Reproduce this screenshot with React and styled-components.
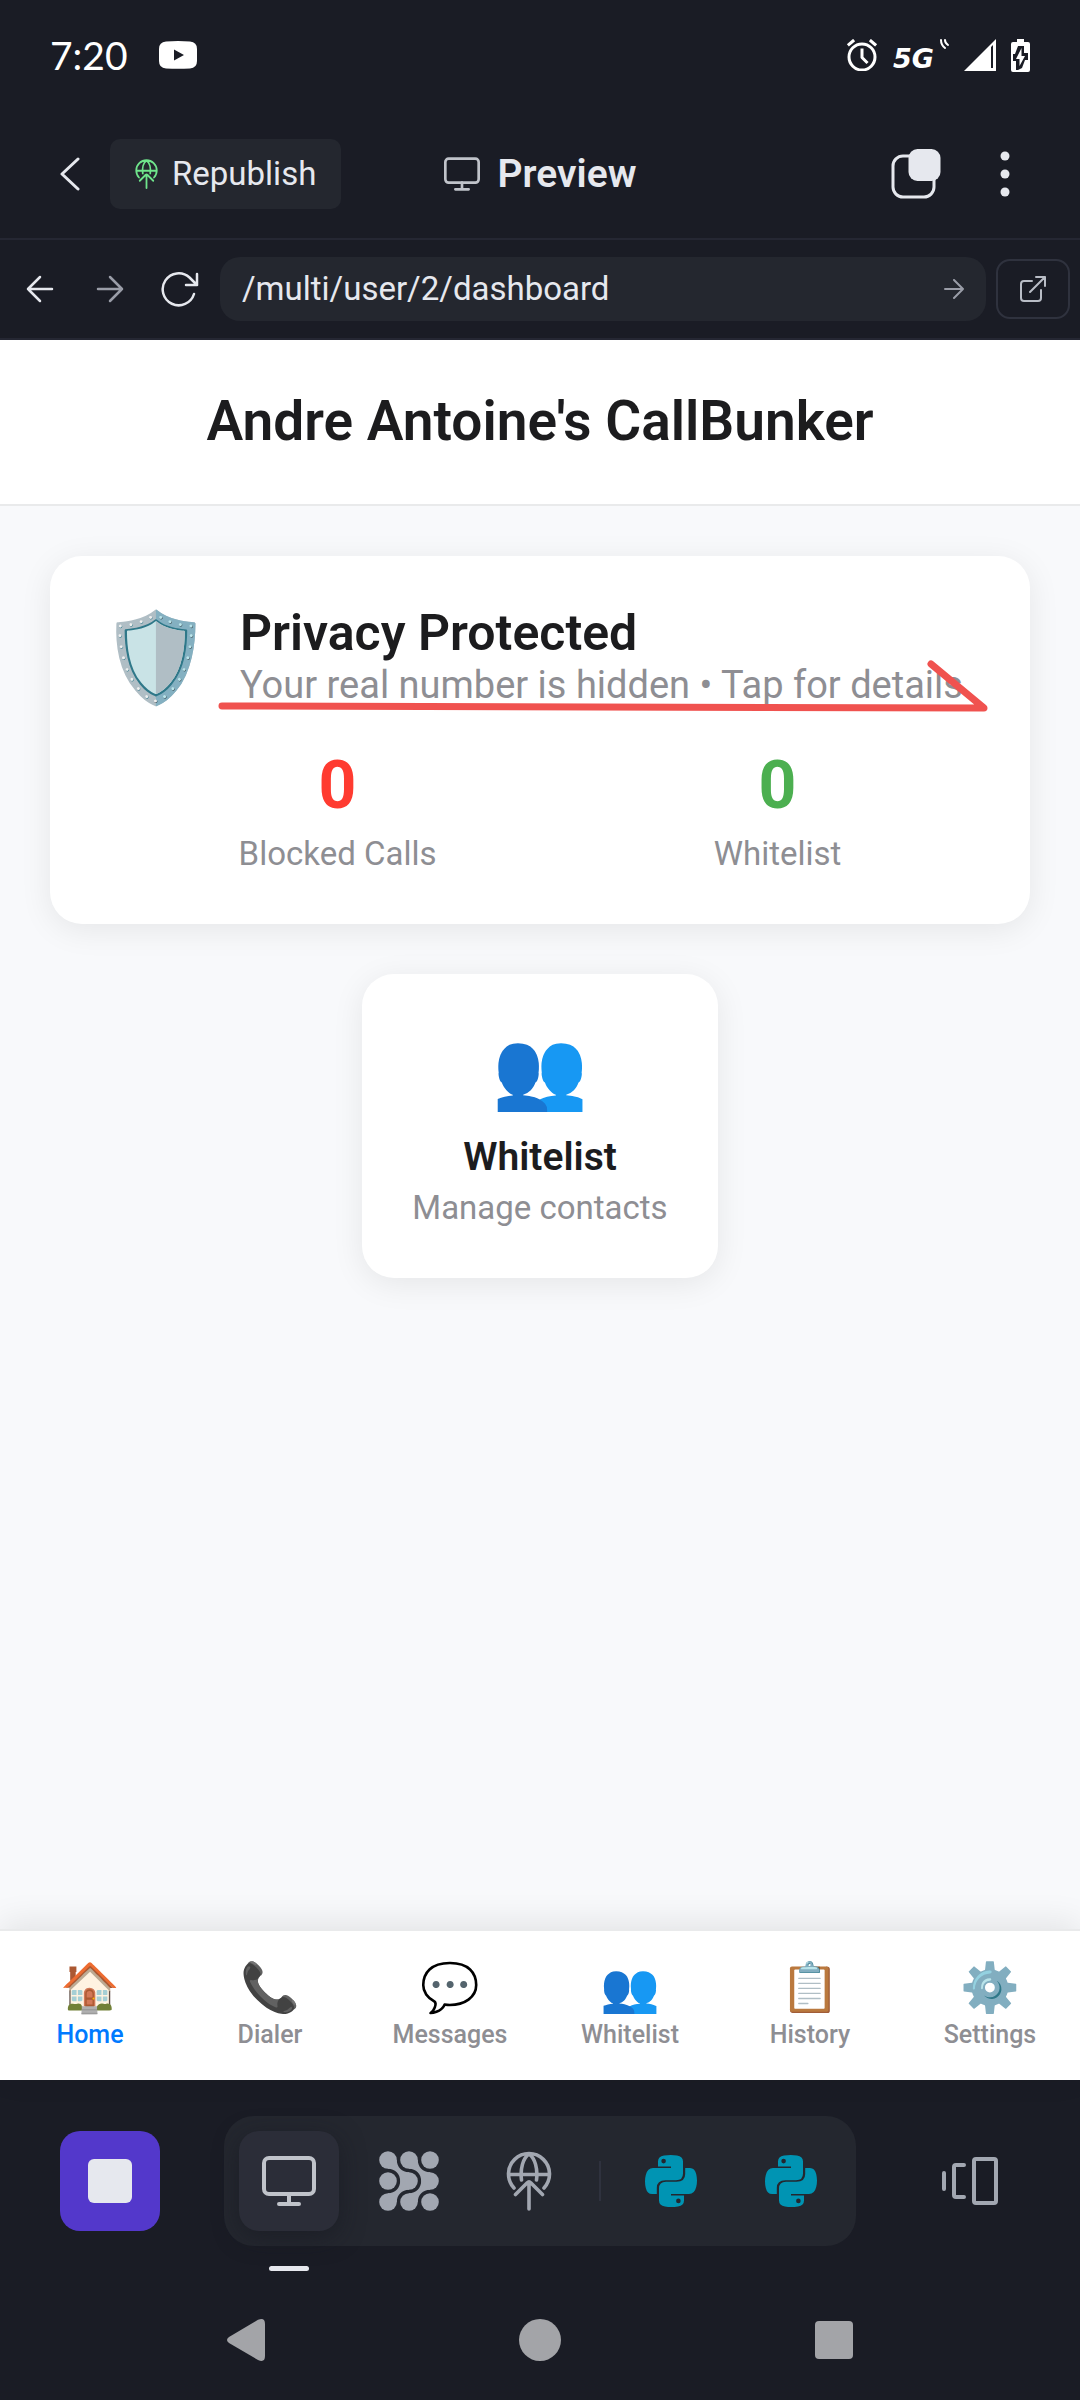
import React from "react";
import styled, { createGlobalStyle, css } from "styled-components";

const colors = {
  chrome: "#1a1c25",
  surface: "#24272f",
  raised: "#2b2d38",
  line: "#252733",
  text: "#e6e8ee",
  muted: "#a2a7b1",
  ink: "#1c1c1e",
  gray: "#8e8e93",
  page: "#f8f9fb",
};

const GlobalStyle = createGlobalStyle`
  *, *::before, *::after { box-sizing: border-box; }
  body { margin: 0; background: ${colors.chrome}; }
  h1, h2, p, dl, dd, dt { margin: 0; font-weight: inherit; }
  button, input { font: inherit; }
`;

const Screen = styled.div`
  min-height: 100vh;
  display: flex;
  flex-direction: column;
  background: ${colors.chrome};
  color: ${colors.text};
  font-family: Roboto, "Liberation Sans", sans-serif;
`;

const Icon = styled.svg`
  display: block;
  flex: none;
  fill: none;
  stroke: currentColor;
  stroke-width: ${(p) => p.$stroke || 4};
  stroke-linecap: round;
  stroke-linejoin: round;
`;

const PlainButton = styled.button`
  display: flex;
  align-items: center;
  justify-content: center;
  padding: 0;
  border: 0;
  background: none;
  color: inherit;
`;

/* Status bar */
const StatusBar = styled.header`
  height: 110px;
  padding: 0 50px;
  display: flex;
  align-items: center;
  justify-content: space-between;
  color: #fff;
`;
const StatusGroup = styled.div`
  display: flex;
  align-items: center;
  gap: ${(p) => p.$gap}px;
`;
const Clock = styled.time`
  font: 400 39px/46px Lato, sans-serif;
`;
const NetworkGroup = styled.span`
  display: flex;
  align-items: flex-start;
  gap: 6px;
  height: 32px;
`;
const Network = styled.span`
  font: italic 700 27px/40px "DejaVu Sans", sans-serif;
`;

/* App header */
const AppHeader = styled.div`
  height: 130px;
  padding: 0 48px;
  display: grid;
  grid-template-columns: 1fr auto 1fr;
  align-items: center;
  border-bottom: 2px solid ${colors.line};
`;
const HeaderSide = styled.div`
  display: flex;
  align-items: center;
  gap: ${(p) => p.$gap}px;
  justify-content: ${(p) => (p.$end ? "flex-end" : "flex-start")};
`;
const IconButton = styled(PlainButton)`
  width: ${(p) => p.$w}px;
  height: 64px;
  color: ${(p) => p.$color || "inherit"};
`;
const Republish = styled(PlainButton)`
  height: 70px;
  padding: 0 25px;
  gap: 14px;
  border-radius: 10px;
  background: ${colors.surface};
  font-size: 33px;
  line-height: 40px;
`;
const PublishMark = styled.span`
  color: #6fe58c;
`;
const PreviewTitle = styled.div`
  display: flex;
  align-items: center;
  gap: 18px;
  font-size: 39px;
  line-height: 46px;
  font-weight: 600;
`;
const TitleMark = styled.span`
  color: #c0c3ca;
`;

/* Address bar */
const AddressBar = styled.form`
  height: 100px;
  padding: 0 10px 0 5px;
  display: flex;
  align-items: center;
  border-bottom: 2px solid ${colors.line};
`;
const AddressField = styled.div`
  flex: 1;
  min-width: 0;
  height: 64px;
  margin: 0 10px 0 5px;
  padding: 0 12px 0 22px;
  display: flex;
  align-items: center;
  border-radius: 20px;
  background: ${colors.surface};
`;
const AddressInput = styled.input`
  flex: 1;
  min-width: 0;
  padding: 0;
  border: 0;
  outline: 0;
  background: none;
  color: ${colors.text};
  font-size: 33px;
  line-height: 40px;
`;
const OpenButton = styled(PlainButton)`
  width: 74px;
  height: 60px;
  border: 2px solid #2f323e;
  border-radius: 14px;
  color: #b9bdc6;
`;

/* Previewed page */
const Page = styled.main`
  flex: 1;
  display: flex;
  flex-direction: column;
  background: ${colors.page};
  color: ${colors.ink};
`;
const PageHeader = styled.header`
  padding: 48px 50px 50px;
  border-bottom: 2px solid #e9eaeb;
  background: #fff;
  text-align: center;
`;
const PageTitle = styled.h1`
  font-size: 55px;
  line-height: 66px;
  font-weight: 600;
`;
const PageBody = styled.div`
  flex: 1;
  padding: 50px;
  display: flex;
  flex-direction: column;
  align-items: center;
  gap: 50px;
`;
const cardStyle = css`
  border-radius: 32px;
  background: #fff;
  box-shadow: 0 6px 32px rgba(0, 0, 0, 0.08);
`;
const PrivacyCard = styled.section`
  ${cardStyle}
  position: relative;
  align-self: stretch;
  padding: 50px;
`;
const PrivacyHead = styled.div`
  display: flex;
  align-items: center;
  gap: 28px;
  margin-bottom: 42px;
`;
const Emoji = styled.span`
  flex: none;
  display: flex;
  align-items: center;
  justify-content: center;
  width: ${(p) => p.$w}px;
  height: ${(p) => p.$h}px;
  font-family: "Noto Color Emoji", sans-serif;
  font-size: ${(p) => p.$size}px;
  line-height: 1;
`;
const PrivacyTitle = styled.h2`
  font-size: 50px;
  line-height: 54px;
  font-weight: 600;
`;
const PrivacyText = styled.p`
  font-size: 38px;
  line-height: 50px;
  color: ${colors.gray};
`;
const Stats = styled.dl`
  display: flex;
  justify-content: space-around;
`;
const Stat = styled.div`
  display: flex;
  flex-direction: column-reverse;
  gap: 14px;
  text-align: center;
`;
const StatValue = styled.dd`
  font-size: 66px;
  line-height: 68px;
  font-weight: 700;
  color: ${(p) => p.$color};
`;
const StatLabel = styled.dt`
  font-size: 33px;
  line-height: 40px;
  color: ${colors.gray};
`;
const Markup = styled.svg`
  position: absolute;
  left: 166px;
  top: 100px;
  fill: none;
  stroke: #f0524f;
  stroke-width: 7;
  stroke-linecap: round;
  stroke-linejoin: round;
`;
const ActionCard = styled(PlainButton)`
  ${cardStyle}
  flex-direction: column;
  padding: 50px;
`;
const ActionTitle = styled.span`
  margin: 18px 0 8px;
  font-size: 39px;
  line-height: 46px;
  font-weight: 600;
`;
const ActionText = styled.span`
  font-size: 33px;
  line-height: 40px;
  color: ${colors.gray};
`;
const TabBar = styled.nav`
  display: grid;
  grid-template-columns: repeat(6, 1fr);
  padding: 28px 0 31px;
  border-top: 2px solid #e9eaeb;
  background: #fff;
  box-shadow: 0 -6px 32px rgba(0, 0, 0, 0.09);
`;
const Tab = styled.a`
  display: flex;
  flex-direction: column;
  align-items: center;
  gap: 4px;
  color: ${(p) => (p.$active ? "#007aff" : colors.gray)};
  font-size: 25px;
  line-height: 28px;
  font-weight: 500;
  text-decoration: none;
`;

/* Workspace dock */
const Dock = styled.div`
  padding: 36px 60px 34px;
  display: flex;
  align-items: center;
  justify-content: space-between;
`;
const DockButton = styled(PlainButton)`
  position: relative;
  width: 100px;
  height: 100px;
  border-radius: 20px;
  color: ${(p) => p.$color || colors.muted};
  ${(p) =>
    p.$active &&
    css`
      background: ${colors.raised};
      box-shadow: 0 6px 24px rgba(20, 21, 30, 0.5);
      &::after {
        content: "";
        position: absolute;
        left: 30px;
        bottom: -40px;
        width: 40px;
        height: 5px;
        border-radius: 3px;
        background: ${colors.text};
      }
    `}
`;
const StopButton = styled(DockButton)`
  background: #5338cb;
`;
const StopMark = styled.span`
  width: 44px;
  height: 44px;
  border-radius: 6px;
  background: ${colors.text};
`;
const DockTray = styled.div`
  display: flex;
  align-items: center;
  gap: 20px;
  padding: 15px;
  border-radius: 30px;
  background: ${colors.surface};
`;
const DockDivider = styled.span`
  width: 2px;
  height: 40px;
  background: #2f323e;
`;
const SystemBar = styled.div`
  height: 120px;
  padding: 0 196px;
  display: flex;
  align-items: center;
  justify-content: space-between;
  color: #a3a4a8;
`;

const Monitor = ({ w, h }) => (
  <Icon width={w} height={h} viewBox="0 0 54 50">
    <rect x="2" y="2" width="50" height="36" rx="5" />
    <path d="M27 38v9M17 48h20" />
  </Icon>
);

const GlobeUp = ({ w, h }) => (
  <Icon width={w} height={h} viewBox="0 0 46 60" $stroke={3.6}>
    <path d="M8 37A20.500 20.500 0 1 1 38 37M2.500 23.500h41M15.500 29C14 18 17 7 23 3c6 4 9 15 7.500 26M23 58V31M9.500 43.500 21 32q2-2 4 0l11.500 11.500" />
  </Icon>
);

const Blobs = () => (
  <Icon width="60" height="60" viewBox="0 0 60 60">
    <g fill="currentColor" stroke="none">
      {[9, 30, 51].map((y) =>
        [9, 30, 51].map((x) => <circle key={`${x}-${y}`} cx={x} cy={y} r="8.800" />)
      )}
      {[0, 21].map((dx) => (
        <g key={dx} transform={`translate(${dx} 0)`}>
          <path d="M9 9h8.800C17.800 16 23 21.200 30 21.200V30h-8.800C21.200 23 16 17.800 9 17.800Z" />
          <path d="M9 51h8.800C17.800 44 23 38.800 30 38.800V30h-8.800C21.200 37 16 42.200 9 42.200Z" />
        </g>
      ))}
    </g>
  </Icon>
);

const snake =
  "M26 11.500H13V6.500Q13 1.500 19 .5Q26-.5 32 .5Q38 1.500 38 6.500V18.500Q38 25.300 31 25.300H20.500Q11.800 25.300 11.800 33V39H7Q2.200 39 .8 33Q-.8 26 .8 20Q2.500 13 8 13H26ZM18.600 3.800a2.300 2.300 0 1 0 0 4.600a2.300 2.300 0 1 0 0-4.600Z";

const Python = () => (
  <Icon width="52" height="52" viewBox="0 0 52 52">
    <g fill="currentColor" fillRule="evenodd" stroke="none">
      <path d={snake} />
      <path d={snake} transform="rotate(180 26 26)" />
    </g>
  </Icon>
);

const tabs = [
  ["Home", "🏠"],
  ["Dialer", "📞"],
  ["Messages", "💬"],
  ["Whitelist", "👥"],
  ["History", "📋"],
  ["Settings", "⚙️"],
];

export default function App() {
  return (
    <Screen>
      <GlobalStyle />
      <StatusBar>
        <StatusGroup $gap={31}>
          <Clock>7:20</Clock>
          <svg width="38" height="28" viewBox="0 0 38 28" aria-hidden="true">
            <path fill="#fff" fillRule="evenodd" d="M7 .5Q19-.5 31 .5 38 1 38 8v12q0 7-7 7.500-12 .5-24 0Q0 27 0 20V8Q0 1 7 .5ZM15 8.500v11l10-5.500Z" />
          </svg>
        </StatusGroup>
        <StatusGroup $gap={15}>
          <Icon width="32" height="32" viewBox="0 0 32 32" $stroke={3} aria-label="Alarm set">
            <circle cx="16" cy="18" r="13" />
            <path d="M16 11v7.500l4.500 4.500M3 5.500 7 2M29 5.500 25 2" strokeLinecap="square" />
          </Icon>
          <NetworkGroup>
            <Network>5G</Network>
            <Icon width="9" height="10" viewBox="0 0 9 10" $stroke={2}>
              <path d="M1 1q0 5 4 8M5 1q0 3 3 5" />
            </Icon>
          </NetworkGroup>
          <svg width="32" height="32" viewBox="0 0 32 32" aria-label="Signal">
            <path fill="#fff" fillRule="evenodd" d="M32 0v32H0ZM27 8v21h2V6Z" />
          </svg>
          <svg width="19" height="33" viewBox="0 0 19 33" aria-label="Battery charging">
            <path fill="#fff" d="M6 0h7v3h4q2 0 2 2v26q0 2-2 2H2q-2 0-2-2V5q0-2 2-2h4Z" />
            <path fill={colors.chrome} d="M7 7h6v7h4v7h-3l-3 8-4 2H5v-9H2v-7h2Z" />
            <path fill="#fff" d="M10.500 9v8H14L8.500 27v-7H5Z" />
          </svg>
        </StatusGroup>
      </StatusBar>

      <AppHeader>
        <HeaderSide $gap={18}>
          <IconButton $w={44} aria-label="Back">
            <Icon width="20" height="34" viewBox="0 0 20 34" $stroke={3}>
              <path d="M18 2 2 17l16 15" />
            </Icon>
          </IconButton>
          <Republish>
            <PublishMark>
              <GlobeUp w={23} h={30} />
            </PublishMark>
            Republish
          </Republish>
        </HeaderSide>
        <PreviewTitle>
          <TitleMark>
            <Monitor w={36} h={34} />
          </TitleMark>
          Preview
        </PreviewTitle>
        <HeaderSide $gap={34} $end>
          <IconButton $w={56} aria-label="Tabs">
            <Icon width="50" height="50" viewBox="0 0 50 50" $stroke={3}>
              <rect x="2" y="7" width="41" height="41" rx="10" />
              <rect x="17.500" y="0" width="32" height="32" rx="9" fill="currentColor" stroke="none" />
            </Icon>
          </IconButton>
          <IconButton $w={54} aria-label="More">
            <Icon width="10" height="46" viewBox="0 0 10 46">
              <g fill="currentColor" stroke="none">
                <circle cx="5" cy="5" r="4.500" />
                <circle cx="5" cy="23" r="4.500" />
                <circle cx="5" cy="41" r="4.500" />
              </g>
            </Icon>
          </IconButton>
        </HeaderSide>
      </AppHeader>

      <AddressBar onSubmit={(e) => e.preventDefault()}>
        <IconButton type="button" $w={70} aria-label="Go back">
          <Icon width="28" height="28" viewBox="0 0 28 28" $stroke={2.5}>
            <path d="M26 14H2M14 2 2 14l12 12" />
          </Icon>
        </IconButton>
        <IconButton type="button" $w={70} $color="#9a9da8" aria-label="Go forward">
          <Icon width="28" height="28" viewBox="0 0 28 28" $stroke={2.5}>
            <path d="M2 14h24M14 2l12 12-12 12" />
          </Icon>
        </IconButton>
        <IconButton type="button" $w={70} aria-label="Reload">
          <Icon width="38" height="36" viewBox="0 0 38 36" $stroke={2.5}>
            <path d="M33 23A16 16 0 1 1 28.500 6.500L36 14M36 3v11H25" />
          </Icon>
        </IconButton>
        <AddressField>
          <AddressInput aria-label="Address" defaultValue="/multi/user/2/dashboard" />
          <IconButton $w={40} $color="#9a9da8" aria-label="Go">
            <Icon width="20" height="20" viewBox="0 0 20 20" $stroke={2}>
              <path d="M1 10h18M10 1l9 9-9 9" />
            </Icon>
          </IconButton>
        </AddressField>
        <OpenButton type="button" aria-label="Open in new tab">
          <Icon width="26" height="26" viewBox="0 0 26 26" $stroke={2}>
            <path d="M12 5H4a3 3 0 0 0-3 3v14a3 3 0 0 0 3 3h14a3 3 0 0 0 3-3v-8M16 1h9v9M25 1 10 16" />
          </Icon>
        </OpenButton>
      </AddressBar>

      <Page>
        <PageHeader>
          <PageTitle>Andre Antoine's CallBunker</PageTitle>
        </PageHeader>
        <PageBody>
          <PrivacyCard>
            <PrivacyHead>
              <Emoji $w={112} $h={104} $size={88}>🛡️</Emoji>
              <div>
                <PrivacyTitle>Privacy Protected</PrivacyTitle>
                <PrivacyText>Your real number is hidden • Tap for details</PrivacyText>
              </div>
            </PrivacyHead>
            <Stats>
              <Stat>
                <StatLabel>Blocked Calls</StatLabel>
                <StatValue $color="#ff3b30">0</StatValue>
              </Stat>
              <Stat>
                <StatLabel>Whitelist</StatLabel>
                <StatValue $color="#4caf50">0</StatValue>
              </Stat>
            </Stats>
            <Markup width="780" height="60" viewBox="0 0 780 60" aria-hidden="true">
              <path d="M6 50 768 52 715 8" />
            </Markup>
          </PrivacyCard>
          <ActionCard>
            <Emoji $w={100} $h={92} $size={77}>👥</Emoji>
            <ActionTitle>Whitelist</ActionTitle>
            <ActionText>Manage contacts</ActionText>
          </ActionCard>
        </PageBody>
        <TabBar>
          {tabs.map(([name, glyph], i) => (
            <Tab key={name} href={`#${name.toLowerCase()}`} $active={i === 0}>
              <Emoji $w={60} $h={58} $size={48}>{glyph}</Emoji>
              {name}
            </Tab>
          ))}
        </TabBar>
      </Page>

      <Dock>
        <StopButton aria-label="Stop">
          <StopMark />
        </StopButton>
        <DockTray>
          <DockButton $active $color="#c0c3ca" aria-label="Preview">
            <Monitor w={54} h={50} />
          </DockButton>
          <DockButton aria-label="Agent">
            <Blobs />
          </DockButton>
          <DockButton aria-label="Publishing">
            <GlobeUp w={46} h={60} />
          </DockButton>
          <DockDivider />
          <DockButton $color="#0094b3" aria-label="Python file">
            <Python />
          </DockButton>
          <DockButton $color="#0094b3" aria-label="Python file">
            <Python />
          </DockButton>
        </DockTray>
        <DockButton aria-label="Switch panes">
          <Icon width="56" height="48" viewBox="0 0 56 48">
            <path d="M2 16v16M22 8H14q-2 0-2 2v28q0 2 2 2h8" />
            <rect x="32" y="2" width="22" height="44" rx="2" />
          </Icon>
        </DockButton>
      </Dock>
      <SystemBar>
        <IconButton $w={100} aria-label="System back">
          <svg width="38" height="42" viewBox="0 0 38 42">
            <path fill="currentColor" d="M31 .8Q38-2 38 5v32q0 7-7 4L2 24q-4-3 0-6Z" />
          </svg>
        </IconButton>
        <IconButton $w={100} aria-label="System home">
          <svg width="42" height="42" viewBox="0 0 42 42">
            <circle fill="currentColor" cx="21" cy="21" r="21" />
          </svg>
        </IconButton>
        <IconButton $w={100} aria-label="System recents">
          <svg width="38" height="38" viewBox="0 0 38 38">
            <rect fill="currentColor" width="38" height="38" rx="4" />
          </svg>
        </IconButton>
      </SystemBar>
    </Screen>
  );
}
